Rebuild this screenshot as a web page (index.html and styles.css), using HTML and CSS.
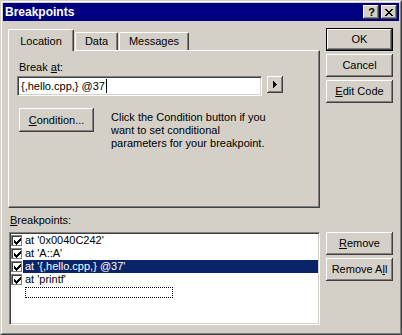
FILE: index.html
```html
<!DOCTYPE html>
<html>
<head>
<meta charset="utf-8">
<link rel="stylesheet" href="styles.css">
</head>
<body>
<div class="window">
  <div class="frame">
    <div class="titlebar">
      <span class="title">Breakpoints</span>
      <div class="caption-btns">
        <span class="cap-btn help">?</span>
        <span class="cap-btn close">
          <svg width="8" height="7" viewBox="0 0 8 7" shape-rendering="crispEdges"><path d="M0 0h2v1h1v1h2v-1h1v-1h2v1h-1v1h-1v1h-1v1h1v1h1v1h1v1h-2v-1h-1v-1h-2v1h-1v1h-2v-1h1v-1h1v-1h1v-1h-1v-1h-1v-1h-1z" fill="#000"/></svg>
        </span>
      </div>
    </div>
    <div class="client">
      <div class="main">
        <div class="left">
          <div class="tabs">
            <div class="tab active tab-location">Location</div>
            <div class="tab tab-data">Data</div>
            <div class="tab tab-messages">Messages</div>
          </div>
          <div class="panel">
            <div class="label">Break <u>a</u>t:</div>
            <div class="edit-row">
              <div class="edit">{,hello.cpp,} @37<span class="caret"></span></div>
              <div class="btn arrow-btn">
                <svg width="4" height="7" viewBox="0 0 4 7" shape-rendering="crispEdges"><path d="M0 0h1v1h1v1h1v1h1v1h-1v1h-1v1h-1v1h-1z" fill="#000"/></svg>
              </div>
            </div>
            <div class="cond-row">
              <div class="btn cond-btn"><span><u>C</u>ondition...</span></div>
              <p class="hint">Click the Condition button if you<br>want to set conditional<br>parameters for your breakpoint.</p>
            </div>
          </div>
        </div>
        <div class="right">
          <div class="btn default">OK</div>
          <div class="btn">Cancel</div>
          <div class="btn"><span><u>E</u>dit Code</span></div>
        </div>
      </div>
      <div class="list-label"><u>B</u>reakpoints:</div>
      <div class="bottom">
        <div class="listbox">
          <div class="row"><span class="chk"><svg width="7" height="7" viewBox="0 0 7 7" shape-rendering="crispEdges"><path d="M6 0h1v3h-1v1h-1v1h-1v1h-1v1h-1v-1h-1v-1h-1v-3h1v1h1v1h1v-1h1v-1h1v-1h1z" fill="#000"/></svg></span><span class="item">at '0x0040C242'</span></div>
          <div class="row"><span class="chk"><svg width="7" height="7" viewBox="0 0 7 7" shape-rendering="crispEdges"><path d="M6 0h1v3h-1v1h-1v1h-1v1h-1v1h-1v-1h-1v-1h-1v-3h1v1h1v1h1v-1h1v-1h1v-1h1z" fill="#000"/></svg></span><span class="item">at 'A::A'</span></div>
          <div class="row sel"><span class="chk"><svg width="7" height="7" viewBox="0 0 7 7" shape-rendering="crispEdges"><path d="M6 0h1v3h-1v1h-1v1h-1v1h-1v1h-1v-1h-1v-1h-1v-3h1v1h1v1h1v-1h1v-1h1v-1h1z" fill="#000"/></svg></span><span class="item">at '{,hello.cpp,} @37'</span></div>
          <div class="row"><span class="chk"><svg width="7" height="7" viewBox="0 0 7 7" shape-rendering="crispEdges"><path d="M6 0h1v3h-1v1h-1v1h-1v1h-1v1h-1v-1h-1v-1h-1v-3h1v1h1v1h1v-1h1v-1h1v-1h1z" fill="#000"/></svg></span><span class="item">at 'printf'</span></div>
          <div class="row"><span class="focus"></span></div>
        </div>
        <div class="right">
          <div class="btn"><span><u>R</u>emove</span></div>
          <div class="btn"><span>Remove A<u>l</u>l</span></div>
        </div>
      </div>
    </div>
  </div>
</div>
</body>
</html>
```
FILE: styles.css
```css
body {
  margin: 0;
  background: #D4D0C8;
  font-family: "Liberation Sans", Arial, sans-serif;
  font-size: 11px;
  line-height: 13px;
  color: #000;
}

.window {
  width: 402px;
  height: 335px;
  box-sizing: border-box;
  border: 1px solid;
  border-color: #D4D0C8 #404040 #404040 #D4D0C8;
  background: #D4D0C8;
}

.frame {
  height: 100%;
  box-sizing: border-box;
  border: 1px solid;
  border-color: #fff #808080 #808080 #fff;
  padding: 1px;
  display: flex;
  flex-direction: column;
}

.titlebar {
  height: 18px;
  flex: none;
  background: #000080;
  display: flex;
  align-items: center;
  justify-content: space-between;
  padding: 0 2px;
}

.title {
  color: #fff;
  font-weight: bold;
  font-size: 12px;
  line-height: 14px;
}

.caption-btns {
  display: flex;
  gap: 2px;
}

.cap-btn {
  width: 16px;
  height: 14px;
  box-sizing: border-box;
  background: #D4D0C8;
  box-shadow: inset -1px -1px #404040, inset 1px 1px #fff, inset -2px -2px #808080;
  display: flex;
  align-items: center;
  justify-content: center;
}

.cap-btn.help {
  font-weight: bold;
  font-size: 11px;
  line-height: 12px;
  padding-left: 1px;
}

.cap-btn.close svg {
  margin-left: 0;
  margin-top: 0;
}

.client {
  flex: 1;
  padding: 7px 0 0 5px;
  display: flex;
  flex-direction: column;
}

.main {
  display: flex;
  gap: 6px;
}

.left {
  width: 312px;
  margin-top: 1px;
}

.right {
  width: 67px;
  display: flex;
  flex-direction: column;
  gap: 3px;
}

.btn {
  height: 23px;
  box-sizing: border-box;
  background: #D4D0C8;
  box-shadow: inset -1px -1px #404040, inset 1px 1px #fff, inset -2px -2px #808080;
  display: flex;
  align-items: center;
  justify-content: center;
  white-space: nowrap;
}

.btn.default {
  border: 1px solid #000;
}

/* tabs */
.tabs {
  display: flex;
  align-items: flex-end;
  height: 21px;
  position: relative;
  z-index: 1;
}

.tab {
  box-sizing: border-box;
  height: 18px;
  padding-top: 2px;
  text-align: center;
  border-top: 1px solid #fff;
  border-left: 1px solid #fff;
  border-right: 1px solid #404040;
  border-radius: 2px 2px 0 0;
  box-shadow: inset -1px 0 #808080;
  background: #D4D0C8;
}

.tab.active {
  height: 22px;
  padding-top: 5px;
  margin-bottom: -1px;
}

.tab-location { width: 66px; }
.tab-data { width: 43px; margin-left: 1px; }
.tab-messages { width: 70px; margin-left: 1px; }

.panel {
  box-sizing: border-box;
  height: 158px;
  border-top: 1px solid #fff;
  border-left: 1px solid #fff;
  border-right: 1px solid #404040;
  border-bottom: 1px solid #404040;
  box-shadow: inset -1px -1px #808080;
  padding: 10px 0 0 8px;
}

.label {
  margin-left: 2px;
}

.edit-row {
  display: flex;
  align-items: flex-start;
  gap: 5px;
  margin-top: 2px;
}

.edit {
  width: 245px;
  height: 20px;
  box-sizing: border-box;
  background: #fff;
  border: 1px solid;
  border-color: #808080 #fff #fff #808080;
  box-shadow: inset 1px 1px #404040, inset -1px -1px #D4D0C8;
  padding: 0 0 0 3px;
  display: flex;
  align-items: center;
  white-space: nowrap;
}

.caret {
  display: inline-block;
  width: 1px;
  height: 14px;
  background: #000;
  margin-left: 1px;
}

.arrow-btn {
  width: 16px;
  height: 17px;
}

.cond-row {
  display: flex;
  align-items: flex-start;
  margin-top: 12px;
}

.cond-btn {
  width: 75px;
  height: 24px;
  margin-left: 2px;
}

.hint {
  margin: 3px 0 0 17px;
}

/* list */
.list-label {
  margin-top: 6px;
  padding-left: 2px;
}

.bottom {
  display: flex;
  gap: 6px;
  margin-top: 5px;
}

.listbox {
  width: 311px;
  height: 93px;
  margin-left: 1px;
  box-sizing: border-box;
  background: #fff;
  border: 1px solid;
  border-color: #808080 #fff #fff #808080;
  box-shadow: inset 1px 1px #404040, inset -1px -1px #D4D0C8;
  padding: 1px 1px 0 1px;
}

.row {
  height: 13px;
  display: flex;
  align-items: center;
}

.chk {
  width: 11px;
  height: 11px;
  flex: none;
  box-sizing: border-box;
  border: 1px solid #808080;
  box-shadow: inset 1px 1px #404040;
  background: #fff;
  margin-right: 1px;
  display: flex;
  align-items: center;
  justify-content: center;
  padding: 1px 0 0 1px;
}

.item {
  padding: 0 2px;
  height: 13px;
  line-height: 13px;
  white-space: nowrap;
}

.row.sel .item {
  flex: 1;
  background: #0A246A;
  color: #fff;
}

.focus {
  margin-left: 14px;
  width: 148px;
  height: 11px;
  box-sizing: border-box;
  border: 1px dotted #000;
}
```
